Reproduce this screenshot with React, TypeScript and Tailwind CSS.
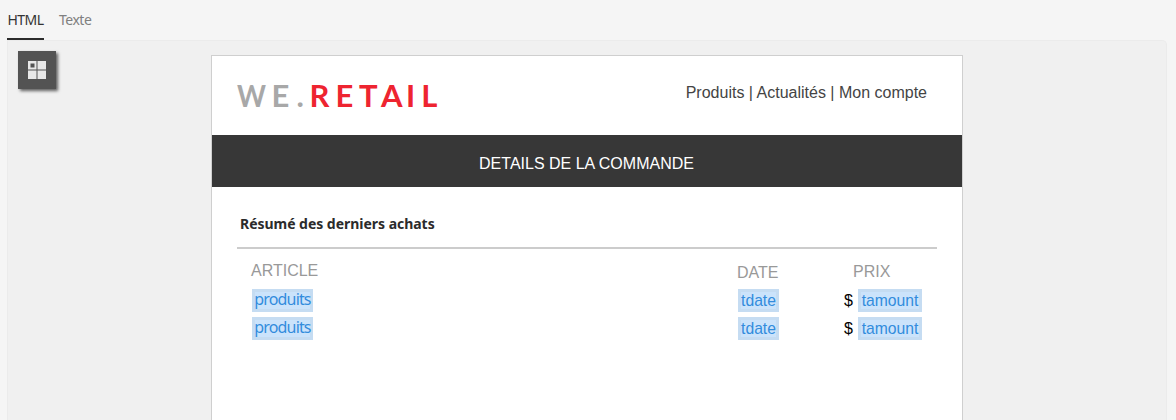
import type { ReactNode } from "react";

function Field({ className = "", children }: { className?: string; children: ReactNode }) {
  return (
    <span
      className={`box-border flex h-[23px] shrink-0 items-center justify-center whitespace-nowrap border-[3px] border-[#c5dcf2] bg-[#cbe3fb] text-[#328cdd] ${className}`}
    >
      {children}
    </span>
  );
}

function Logo() {
  return (
    <svg width="212" height="44" viewBox="0 -8 212 44" className="-mt-2 block overflow-visible" fontFamily="Lato, sans-serif" fontSize="31">
      <g fill="#a8a8a8" fontWeight="700">
        <text y="27" x="0" textLength="29" lengthAdjust="spacingAndGlyphs">W</text>
        <text y="27" x="34.4">E</text>
        <text y="27" x="59.6">.</text>
      </g>
      <g fill="#ee2430" fontWeight="700">
        <text y="27" x="72.6 98.6 122 143.9 169 184.2">RETAIL</text>
      </g>
    </svg>
  );
}

function PurchaseRow() {
  return (
    <div className="flex h-7">
      <div className="w-[501px] shrink-0 pl-[15px]">
        <Field className="w-[61px] pb-[3px] font-['Noto_Sans',sans-serif] text-[16px] tracking-[-0.85px]">produits</Field>
      </div>
      <Field className="w-[41px] text-[15.7px]">tdate</Field>
      <span className="ml-[65px] w-[14px] shrink-0 text-[16px] leading-[23px] text-black">$</span>
      <Field className="w-[64px] text-[15.7px]">tamount</Field>
    </div>
  );
}

export default function App() {
  return (
    <div className="h-[420px] w-full overflow-hidden bg-[#f5f5f5] font-['Liberation_Sans',sans-serif]">
      <nav className="flex h-10 gap-[15px] pl-[7px] font-['Noto_Sans',sans-serif] text-[14px] tracking-[-0.5px]">
        <button className="h-10 w-[37px] whitespace-nowrap border-b-2 border-[#2c2c2c] pt-px text-[#333]">HTML</button>
        <button className="h-10 whitespace-nowrap border-b-2 border-transparent pt-px text-[#808080]">Texte</button>
      </nav>
      <main className="ml-[7px] flex h-[380px] w-[1160px] rounded-tr-[5px] border border-b-0 border-[#ebebeb] bg-[#f0f0f0]">
        <button
          aria-label="Blocs"
          className="ml-[10px] mt-[10px] flex h-[38px] w-[38px] items-center justify-center bg-[#535353] shadow-[2px_2px_3px_rgba(0,0,0,0.6)]"
        >
          <svg width="18" height="18" viewBox="0 0 18 18" fill="#e8e8e8">
            <path fillRule="evenodd" d="M0 0h8.5v8.5H0zM2.5 2.5v4h4v-4z" />
            <path d="M9.5 0H18v8.5H9.5zM0 9.5h8.5V18H0zM9.5 9.5H18V18H9.5z" />
          </svg>
        </button>
        <article className="ml-[155px] mt-[14px] h-[380px] w-[752px] border border-[#cfcfcf] bg-white">
          <header className="flex h-[79px] justify-between pl-[25px] pr-[35px] pt-[24px]">
            <Logo />
            <span className="whitespace-nowrap pt-px text-[16px] leading-6 text-[#444]">Produits | Actualités | Mon compte</span>
          </header>
          <h1 className="flex h-[52px] items-center justify-center bg-[#373737] pr-px pt-1.5 text-[16px] text-white">
            DETAILS DE LA COMMANDE
          </h1>
          <section className="px-[25px] pt-[26px]">
            <h2 className="h-[36px] border-b-2 border-[#cccccc] pl-[3px] font-['Noto_Sans',sans-serif] text-[14px] font-bold leading-[22px] tracking-[-0.03px] text-[#2b2b2b]">
              Résumé des derniers achats
            </h2>
            <div className="flex h-[40px] pt-[13px] text-[16px] leading-[18px] text-[#999]">
              <span className="w-[500px] shrink-0 pl-[14px]">ARTICLE</span>
              <span className="w-[116px] shrink-0 pt-[2px]">DATE</span>
              <span className="pt-[1px]">PRIX</span>
            </div>
            <PurchaseRow />
            <PurchaseRow />
          </section>
        </article>
      </main>
    </div>
  );
}
